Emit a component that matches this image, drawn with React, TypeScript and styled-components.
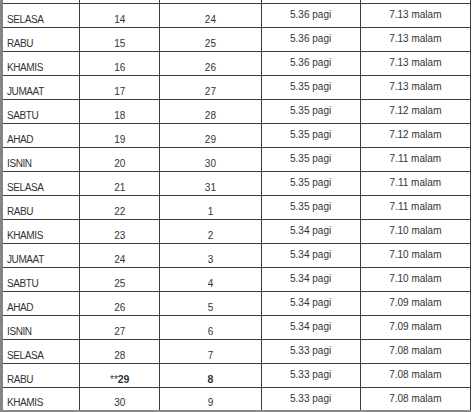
import React from "react";
import styled, { createGlobalStyle } from "styled-components";

type IRow = {
    day: string;
    date: string;
    hijri: string;
    imsak: string;
    maghrib: string;
    highlight?: boolean;
};

const rows: IRow[] = [
    { day: "SELASA", date: "14", hijri: "24", imsak: "5.36", maghrib: "7.13" },
    { day: "RABU", date: "15", hijri: "25", imsak: "5.36", maghrib: "7.13" },
    { day: "KHAMIS", date: "16", hijri: "26", imsak: "5.36", maghrib: "7.13" },
    { day: "JUMAAT", date: "17", hijri: "27", imsak: "5.35", maghrib: "7.13" },
    { day: "SABTU", date: "18", hijri: "28", imsak: "5.35", maghrib: "7.12" },
    { day: "AHAD", date: "19", hijri: "29", imsak: "5.35", maghrib: "7.12" },
    { day: "ISNIN", date: "20", hijri: "30", imsak: "5.35", maghrib: "7.11" },
    { day: "SELASA", date: "21", hijri: "31", imsak: "5.35", maghrib: "7.11" },
    { day: "RABU", date: "22", hijri: "1", imsak: "5.35", maghrib: "7.11" },
    { day: "KHAMIS", date: "23", hijri: "2", imsak: "5.34", maghrib: "7.10" },
    { day: "JUMAAT", date: "24", hijri: "3", imsak: "5.34", maghrib: "7.10" },
    { day: "SABTU", date: "25", hijri: "4", imsak: "5.34", maghrib: "7.10" },
    { day: "AHAD", date: "26", hijri: "5", imsak: "5.34", maghrib: "7.09" },
    { day: "ISNIN", date: "27", hijri: "6", imsak: "5.34", maghrib: "7.09" },
    { day: "SELASA", date: "28", hijri: "7", imsak: "5.33", maghrib: "7.08" },
    { day: "RABU", date: "29", hijri: "8", imsak: "5.33", maghrib: "7.08", highlight: true },
    { day: "KHAMIS", date: "30", hijri: "9", imsak: "5.33", maghrib: "7.08" },
];

const GlobalStyle = createGlobalStyle`
    html, body {
        margin: 0;
        padding: 0;
        background: #ffffff;
    }
    body {
        overflow: hidden;
    }
`;

const Page = styled.div`
    width: 474px;
    height: 412px;
    overflow: hidden;
    background: #ffffff;
`;

const Table = styled.table`
    width: 471px;
    margin-top: -21px;
    table-layout: fixed;
    border-collapse: collapse;
    border-left: 3px solid #858585;
    border-bottom: 3px solid #8a8a8a;
    font-family: "Liberation Sans", Arial, sans-serif;
    font-size: 10px;
    color: #333333;
`;

const Row = styled.tr`
    height: 24px;
`;

const Cell = styled.td<{ align?: string; valign?: string }>`
    border: 1px solid #3c3c3c;
    padding: 0 4px 1px 4px;
    text-align: ${({ align }) => align || "center"};
    vertical-align: ${({ valign }) => valign || "bottom"};
    line-height: 12px;
    white-space: nowrap;
    overflow: hidden;
`;

const DayCell = styled(Cell)`
    letter-spacing: -0.4px;
`;

const Strong = styled.b`
    font-weight: bold;
    font-size: 10.5px;
`;

const App = () => {
    return (
        <Page>
            <GlobalStyle />
            <Table>
                <colgroup>
                    <col style={{ width: 78 }} />
                    <col style={{ width: 80 }} />
                    <col style={{ width: 101 }} />
                    <col style={{ width: 99 }} />
                    <col style={{ width: 110 }} />
                </colgroup>
                <tbody>
                    {/* row scrolled above the visible area, only its lines show */}
                    <Row>
                        <DayCell />
                        <Cell />
                        <Cell />
                        <Cell />
                        <Cell />
                    </Row>
                    {rows.map((r, i) => (
                        <Row key={i}>
                            <DayCell align="left">{r.day}</DayCell>
                            <Cell>
                                {r.highlight ? (
                                    <>
                                        **<Strong>{r.date}</Strong>
                                    </>
                                ) : (
                                    r.date
                                )}
                            </Cell>
                            <Cell>{r.highlight ? <Strong>{r.hijri}</Strong> : r.hijri}</Cell>
                            <Cell valign="middle">{r.imsak} pagi</Cell>
                            <Cell valign="middle">{r.maghrib} malam</Cell>
                        </Row>
                    ))}
                </tbody>
            </Table>
        </Page>
    );
};

export default App;
